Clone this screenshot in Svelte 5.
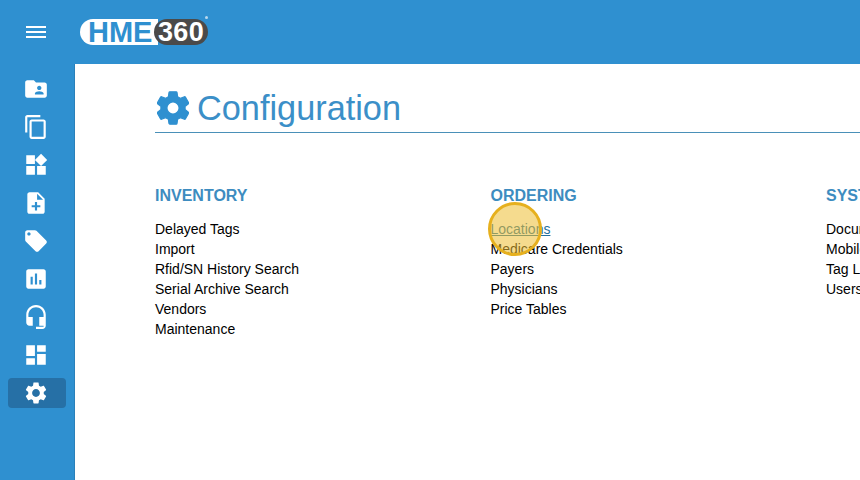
<script>
  const gear = 'M19.14 12.94c.04-.3.06-.61.06-.94 0-.32-.02-.64-.07-.94l2.03-1.58c.18-.14.23-.41.12-.61l-1.92-3.32c-.12-.22-.37-.29-.59-.22l-2.39.96c-.5-.38-1.03-.7-1.62-.94l-.36-2.54c-.04-.24-.24-.41-.48-.41h-3.84c-.24 0-.43.17-.47.41l-.36 2.54c-.59.24-1.13.57-1.62.94l-2.39-.96c-.22-.08-.47 0-.59.22L2.74 8.87c-.12.21-.08.47.12.61l2.03 1.58c-.05.3-.09.63-.09.94s.02.64.07.94l-2.03 1.58c-.18.14-.23.41-.12.61l1.92 3.32c.12.22.37.29.59.22l2.39-.96c.5.38 1.03.7 1.62.94l.36 2.54c.05.24.24.41.48.41h3.84c.24 0 .44-.17.47-.41l.36-2.54c.59-.24 1.13-.56 1.62-.94l2.39.96c.22.08.47 0 .59-.22l1.92-3.32c.12-.22.07-.47-.12-.61l-2.01-1.58zM12 15.6c-1.98 0-3.6-1.62-3.6-3.6s1.62-3.6 3.6-3.6 3.6 1.62 3.6 3.6-1.62 3.6-3.6 3.6z';

  const navItems = [
    { d: 'M20 6h-8l-2-2H4c-1.1 0-2 .9-2 2v12c0 1.1.9 2 2 2h16c1.1 0 2-.9 2-2V8c0-1.1-.9-2-2-2zm-5 3c1.1 0 2 .9 2 2s-.9 2-2 2-2-.9-2-2 .9-2 2-2zm4 8h-8v-1c0-1.33 2.67-2 4-2s4 .67 4 2v1z' },
    { d: 'M16 1H4c-1.1 0-2 .9-2 2v14h2V3h12V1zm3 4H8c-1.1 0-2 .9-2 2v14c0 1.1.9 2 2 2h11c1.1 0 2-.9 2-2V7c0-1.1-.9-2-2-2zm0 16H8V7h11v14z' },
    { d: 'M13 13v8h8v-8h-8zM3 21h8v-8H3v8zM3 3v8h8V3H3zm13.66-1.31L11 7.34 16.66 13l5.66-5.66-5.66-5.65z' },
    { d: 'M14 2H6c-1.1 0-1.99.9-1.99 2L4 20c0 1.1.89 2 1.99 2H18c1.1 0 2-.9 2-2V8l-6-6zm2 14h-3v3h-2v-3H8v-2h3v-3h2v3h3v2zm-3-7V3.5L18.5 9H13z' },
    { d: 'M21.41 11.58l-9-9C12.05 2.22 11.55 2 11 2H4c-1.1 0-2 .9-2 2v7c0 .55.22 1.05.59 1.42l9 9c.36.36.86.58 1.41.58.55 0 1.05-.22 1.41-.59l7-7c.37-.36.59-.86.59-1.41 0-.55-.23-1.06-.59-1.42zM5.5 7C4.67 7 4 6.33 4 5.5S4.67 4 5.5 4 7 4.67 7 5.5 6.33 7 5.5 7z' },
    { d: 'M19 3H5c-1.1 0-2 .9-2 2v14c0 1.1.9 2 2 2h14c1.1 0 2-.9 2-2V5c0-1.1-.9-2-2-2zM9 17H7v-7h2v7zm4 0h-2V7h2v10zm4 0h-2v-4h2v4z' },
    { d: 'M12 1c-4.97 0-9 4.03-9 9v7c0 1.66 1.34 3 3 3h3v-8H5v-2c0-3.87 3.13-7 7-7s7 3.13 7 7v2h-4v8h4v1h-7v2h6c1.66 0 3-1.34 3-3V10c0-4.97-4.03-9-9-9z' },
    { d: 'M3 13h8V3H3v10zm0 8h8v-6H3v6zm10 0h8V11h-8v10zm0-18v6h8V3h-8z' },
    { d: gear, active: true }
  ];

  const sections = [
    { title: 'INVENTORY', links: ['Delayed Tags', 'Import', 'Rfid/SN History Search', 'Serial Archive Search', 'Vendors', 'Maintenance'] },
    { title: 'ORDERING', links: ['Locations', 'Medicare Credentials', 'Payers', 'Physicians', 'Price Tables'] },
    { title: 'SYSTEM', links: ['Document Types', 'Mobile Users', 'Tag Layouts', 'Users'] }
  ];
</script>

<div class="page">
  <header class="topbar">
    <button class="menu" aria-label="Menu"><span></span><span></span><span></span></button>
    <div class="logo">
      <span class="hme">HME</span><span class="num">360</span><i class="reg"></i>
    </div>
  </header>

  <div class="body">
    <nav class="sidebar">
      {#each navItems as item}
        <a href="#/" class="nav-item" class:active={item.active}>
          <svg viewBox="0 0 24 24" width="26" height="26" fill="#fff"><path d={item.d} /></svg>
        </a>
      {/each}
    </nav>

    <main class="content">
      <h1 class="title">
        <svg viewBox="2.5 2 19 20" width="32" height="34" fill="#2f90d0" stroke="#2f90d0" stroke-width="0.7"><path d={gear} /></svg>
        Configuration
      </h1>
      <div class="columns">
        {#each sections as section}
          <section class="col">
            <h2>{section.title}</h2>
            <ul>
              {#each section.links as link}
                <li><a href="#/" class:hovered={link === 'Locations'}>{link}</a></li>
              {/each}
            </ul>
          </section>
        {/each}
      </div>
      <div class="click-marker"></div>
    </main>
  </div>
</div>

<style>
  :global(body) {
    margin: 0;
    background: #fff;
    font-family: "Liberation Sans", Arial, sans-serif;
    overflow: hidden;
  }

  .page {
    width: 860px;
    height: 480px;
    overflow: hidden;
    display: flex;
    flex-direction: column;
  }

  .topbar {
    height: 64px;
    flex: none;
    background: #2f90d0;
    display: flex;
    align-items: center;
  }

  .menu {
    width: 72px;
    height: 64px;
    padding: 0;
    border: 0;
    background: none;
    display: flex;
    flex-direction: column;
    align-items: center;
    justify-content: center;
    gap: 3px;
  }

  .menu span {
    width: 20px;
    height: 2px;
    background: #fff;
  }

  .logo {
    position: relative;
    margin-left: 8px;
    display: flex;
    height: 26px;
    align-items: stretch;
    font-weight: 700;
    line-height: 26px;
  }

  .hme {
    width: 78px;
    padding-left: 8px;
    box-sizing: border-box;
    background: #fff;
    color: #2f90d0;
    border-radius: 13px 0 0 13px;
    font-size: 29px;
    white-space: nowrap;
  }

  .num {
    width: 54px;
    margin-left: -4px;
    text-align: center;
    background: #4a4a4a;
    color: #fff;
    border-radius: 13px;
    font-size: 27px;
    letter-spacing: 0.4px;
  }

  .reg {
    position: absolute;
    right: 0;
    top: -3px;
    width: 3px;
    height: 3px;
    border-radius: 50%;
    background: #b9d8ee;
  }

  .body {
    flex: 1;
    display: flex;
    min-height: 0;
  }

  .sidebar {
    width: 75px;
    flex: none;
    box-sizing: border-box;
    background: #2f90d0;
    border-right: 1px solid #2a80ba;
    padding: 10px 0 0 8px;
    display: flex;
    flex-direction: column;
    gap: 8px;
  }

  .nav-item {
    width: 58px;
    height: 30px;
    display: flex;
    align-items: center;
    justify-content: center;
    border-radius: 4px;
  }

  .nav-item svg {
    margin-left: -2px;
  }

  .nav-item.active {
    background: #2670a6;
  }

  .content {
    position: relative;
    flex: 1;
    min-width: 0;
    padding: 21px 0 0 80px;
  }

  .title {
    margin: 0;
    height: 48px;
    box-sizing: border-box;
    border-bottom: 1px solid #4a90b8;
    display: flex;
    align-items: center;
    gap: 8px;
    padding: 0 0 1px 2px;
    font-size: 34.3px;
    font-weight: 400;
    color: #3b8fc8;
    width: 760px;
  }

  .columns {
    display: grid;
    grid-template-columns: repeat(3, 335.5px);
    margin-top: 53px;
  }

  .col h2 {
    margin: 0 0 13px;
    font-size: 16px;
    line-height: 20px;
    font-weight: 700;
    color: #3d8cc0;
  }

  .col ul {
    margin: 0;
    padding: 0;
    list-style: none;
  }

  .col li {
    height: 20px;
    font-size: 14px;
    line-height: 20px;
    white-space: nowrap;
  }

  .col a {
    color: #000;
    text-decoration: none;
  }

  .col a.hovered {
    color: #23709e;
    text-decoration: underline;
  }

  .click-marker {
    position: absolute;
    left: 413px;
    top: 138px;
    width: 54px;
    height: 54px;
    box-sizing: border-box;
    border-radius: 50%;
    border: 3px solid #e6b01e;
    background: rgba(236, 190, 50, 0.55);
  }
</style>
